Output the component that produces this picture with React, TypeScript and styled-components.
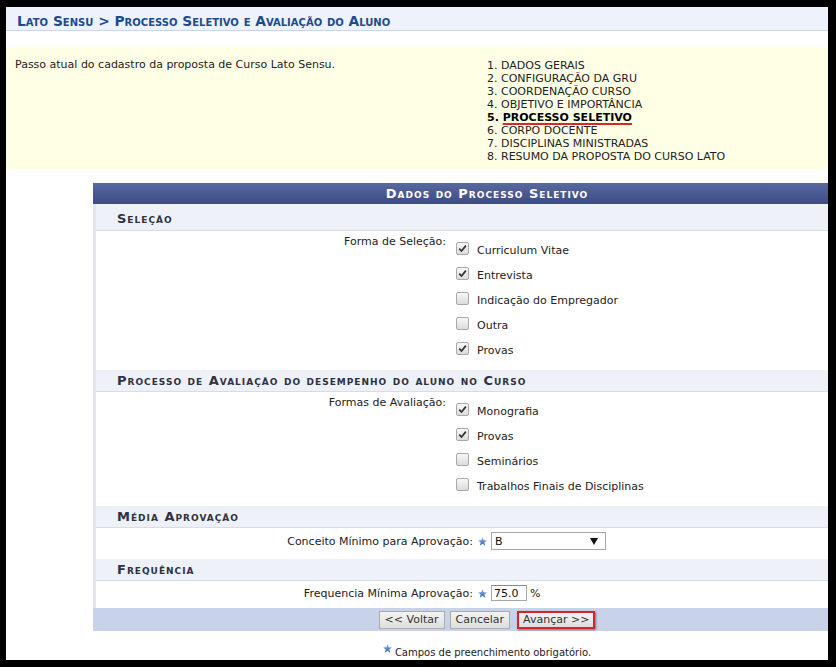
import styled, { createGlobalStyle } from 'styled-components';

const GlobalStyle = createGlobalStyle`
  html, body {
    margin: 0;
    padding: 0;
    background: #000;
  }
  body {
    font-family: "DejaVu Sans", Verdana, sans-serif;
    font-size: 11px;
    color: #222;
  }
`;

const steps = [
  'DADOS GERAIS',
  'CONFIGURAÇÃO DA GRU',
  'COORDENAÇÃO CURSO',
  'OBJETIVO E IMPORTÂNCIA',
  'PROCESSO SELETIVO',
  'CORPO DOCENTE',
  'DISCIPLINAS MINISTRADAS',
  'RESUMO DA PROPOSTA DO CURSO LATO',
];
const currentStep = 4;

const selecao = [
  { label: 'Curriculum Vitae', checked: true },
  { label: 'Entrevista', checked: true },
  { label: 'Indicação do Empregador', checked: false },
  { label: 'Outra', checked: false },
  { label: 'Provas', checked: true },
];

const avaliacao = [
  { label: 'Monografia', checked: true },
  { label: 'Provas', checked: true },
  { label: 'Seminários', checked: false },
  { label: 'Trabalhos Finais de Disciplinas', checked: false },
];

const Frame = styled.div`
  width: 836px;
  height: 667px;
  box-sizing: border-box;
  padding: 7px 8px 7px 6px;
  background: #000;
`;

const Page = styled.div`
  width: 822px;
  height: 653px;
  background: #fff;
  overflow: hidden;
`;

const Breadcrumb = styled.h2`
  margin: 0;
  height: 24px;
  box-sizing: border-box;
  padding: 5px 11px 0;
  display: flex;
  align-items: center;
  background: #eef3fb;
  border-bottom: 1px solid #c9d5e9;
  font-size: 13.8px;
  font-weight: bold;
  font-variant: small-caps;
  color: #1d4b8e;
`;

const StepsBox = styled.div`
  margin-top: 16px;
  height: 123px;
  box-sizing: border-box;
  padding: 11px 0 0 9px;
  display: flex;
  background: #ffffe6;
  line-height: 13px;
`;

const StepsIntro = styled.p`
  margin: 0;
  width: 472px;
`;

const StepsList = styled.ol`
  margin: 0;
  padding: 1px 0 0;
  list-style: none;
`;

const Step = styled.li<{ $current?: boolean }>`
  color: ${(p) => (p.$current ? '#000' : '#222')};
  font-weight: ${(p) => (p.$current ? 'bold' : 'normal')};
`;

const StepMark = styled.span`
  text-decoration: underline;
  text-decoration-color: #d8262b;
  text-decoration-thickness: 2px;
  text-underline-offset: 2px;
`;

const Form = styled.div`
  margin: 13px 0 0 87px;
  width: 788px;
  box-sizing: border-box;
  border-left: 3px solid #e4e6ec;
  background: #fff;
`;

const Caption = styled.div`
  height: 21px;
  margin-left: -3px;
  display: flex;
  align-items: center;
  justify-content: center;
  background: linear-gradient(#5a68a0, #3c4a86);
  color: #fff;
  font-size: 13px;
  font-weight: bold;
  font-variant: small-caps;
  letter-spacing: 1px;
`;

const SectionHeader = styled.div<{ $first?: boolean }>`
  height: ${(p) => (p.$first ? 27 : 22)}px;
  padding: ${(p) => (p.$first ? '3px' : '0')} 0 0 21px;
  display: flex;
  align-items: center;
  background: #eef1f8;
  border-bottom: 1px solid #d6dce8;
  color: #2f3142;
  font-size: 13px;
  font-weight: bold;
  font-variant: small-caps;
  letter-spacing: 1px;
  box-sizing: border-box;
`;

const FieldRow = styled.div<{ $labelWidth: number; $pad: string; $center?: boolean }>`
  display: grid;
  grid-template-columns: ${(p) => p.$labelWidth}px 1fr;
  align-items: ${(p) => (p.$center ? 'center' : 'start')};
  padding: ${(p) => p.$pad};
  line-height: 13px;
`;

const FieldLabel = styled.div<{ $top?: boolean }>`
  text-align: right;
  color: #222;
  margin-top: ${(p) => (p.$top ? '-3px' : '0')};
`;

const CheckList = styled.div`
  display: flex;
  flex-direction: column;
  padding-left: 10px;
`;

const CheckItem = styled.label`
  height: 25px;
  display: flex;
  align-items: center;
  gap: 8px;
  color: #222;
`;

const Box = styled.span`
  width: 11px;
  height: 11px;
  margin-bottom: 5px;
  border: 1px solid #a9a9a9;
  border-radius: 2px;
  background: linear-gradient(#f7f7f7, #dcdcdc);
  display: flex;
  align-items: center;
  justify-content: center;
`;

const Inline = styled.div`
  display: flex;
  align-items: center;
  padding-left: 4px;
`;

const Select = styled.div`
  width: 115px;
  height: 18px;
  margin-left: 4px;
  box-sizing: border-box;
  border: 1px solid #a6a6a6;
  padding: 0 7px 0 3px;
  display: flex;
  align-items: center;
  justify-content: space-between;
  background: #fff;
  color: #111;
`;

const TextInput = styled.div`
  width: 36px;
  height: 16px;
  margin-left: 4px;
  box-sizing: border-box;
  border: 1px solid #a6a6a6;
  border-top-color: #8a8a8a;
  padding-left: 2px;
  display: flex;
  align-items: center;
  color: #111;
`;

const Unit = styled.span`
  margin-left: 3px;
`;

const Footer = styled.div`
  height: 23px;
  margin-left: -3px;
  display: flex;
  align-items: center;
  justify-content: center;
  gap: 5px;
  background: #c8d3ea;
`;

const Button = styled.button<{ $highlight?: boolean }>`
  height: 18px;
  padding: 0 ${(p) => (p.$highlight ? 4 : 5)}px;
  font-family: "DejaVu Sans", Verdana, sans-serif;
  font-size: 11px;
  color: #333;
  background: linear-gradient(#f4f4f4, #dedede);
  border: ${(p) => (p.$highlight ? '2px solid #d8232a' : '1px solid #aaa')};
  box-shadow: ${(p) => (p.$highlight ? '1px 1px 2px rgba(0,0,0,0.45)' : 'none')};
  margin-left: ${(p) => (p.$highlight ? '2px' : '0')};
  line-height: 14px;
`;

const Note = styled.p`
  margin: 13px 0 0 87px;
  width: 788px;
  text-align: center;
  font-size: 10px;
  line-height: 13px;
  color: #222;
`;

const StarWrap = styled.span<{ $raised?: boolean }>`
  display: inline-flex;
  vertical-align: ${(p) => (p.$raised ? '3px' : 'middle')};
  margin: 0 ${(p) => (p.$raised ? '3px' : '0')} 0 ${(p) => (p.$raised ? '0' : '1px')};
`;

const Star = ({ raised }: { raised?: boolean }) => (
  <StarWrap $raised={raised}>
    <svg width="9" height="9" viewBox="0 0 10 10">
      <defs>
        <linearGradient id={raised ? 'sg2' : 'sg1'} x1="0" y1="0" x2="0" y2="1">
          <stop offset="0" stopColor="#8fb3e6" />
          <stop offset="1" stopColor="#2c62b4" />
        </linearGradient>
      </defs>
      <polygon
        points="5,0.4 6.3,3.7 9.8,3.8 7,6 8,9.6 5,7.5 2,9.6 3,6 0.2,3.8 3.7,3.7"
        fill={`url(#${raised ? 'sg2' : 'sg1'})`}
      />
    </svg>
  </StarWrap>
);

const Check = ({ checked }: { checked: boolean }) => (
  <Box>
    {checked && (
      <svg width="9" height="9" viewBox="0 0 9 9">
        <path d="M1.2 4.6 L3.5 7 L7.9 1.6" stroke="#333" strokeWidth="1.7" fill="none" />
      </svg>
    )}
  </Box>
);

const Options = ({ items }: { items: { label: string; checked: boolean }[] }) => (
  <CheckList>
    {items.map((it) => (
      <CheckItem key={it.label}>
        <Check checked={it.checked} />
        {it.label}
      </CheckItem>
    ))}
  </CheckList>
);

const App = (): JSX.Element => (
  <Frame>
    <GlobalStyle />
    <Page>
      <Breadcrumb>Lato Sensu &gt; Processo Seletivo e Avaliação do Aluno</Breadcrumb>

      <StepsBox>
        <StepsIntro>Passo atual do cadastro da proposta de Curso Lato Sensu.</StepsIntro>
        <StepsList>
          {steps.map((s, i) => (
            <Step key={s} $current={i === currentStep}>
              {i + 1}.{' '}
              {i === currentStep ? <StepMark>{s}</StepMark> : s}
            </Step>
          ))}
        </StepsList>
      </StepsBox>

      <Form>
        <Caption>Dados do Processo Seletivo</Caption>

        <SectionHeader $first>Seleção</SectionHeader>
        <FieldRow $labelWidth={350} $pad="7px 0">
          <FieldLabel $top>Forma de Seleção:</FieldLabel>
          <Options items={selecao} />
        </FieldRow>

        <SectionHeader>Processo de Avaliação do desempenho do aluno no Curso</SectionHeader>
        <FieldRow $labelWidth={350} $pad="7px 0">
          <FieldLabel $top>Formas de Avaliação:</FieldLabel>
          <Options items={avaliacao} />
        </FieldRow>

        <SectionHeader>Média Aprovação</SectionHeader>
        <FieldRow $labelWidth={377} $pad="4px 0 9px" $center>
          <FieldLabel>Conceito Mínimo para Aprovação:</FieldLabel>
          <Inline>
            <Star />
            <Select>
              <span>B</span>
              <svg width="8" height="7" viewBox="0 0 8 7">
                <polygon points="0,0 8,0 4,7" fill="#111" />
              </svg>
            </Select>
          </Inline>
        </FieldRow>

        <SectionHeader>Frequência</SectionHeader>
        <FieldRow $labelWidth={377} $pad="4px 0 7px" $center>
          <FieldLabel>Frequencia Mínima Aprovação:</FieldLabel>
          <Inline>
            <Star />
            <TextInput>75.0</TextInput>
            <Unit>%</Unit>
          </Inline>
        </FieldRow>

        <Footer>
          <Button>&lt;&lt; Voltar</Button>
          <Button>Cancelar</Button>
          <Button $highlight>Avançar &gt;&gt;</Button>
        </Footer>
      </Form>

      <Note>
        <Star raised />
        Campos de preenchimento obrigatório.
      </Note>
    </Page>
  </Frame>
);

export default App;
